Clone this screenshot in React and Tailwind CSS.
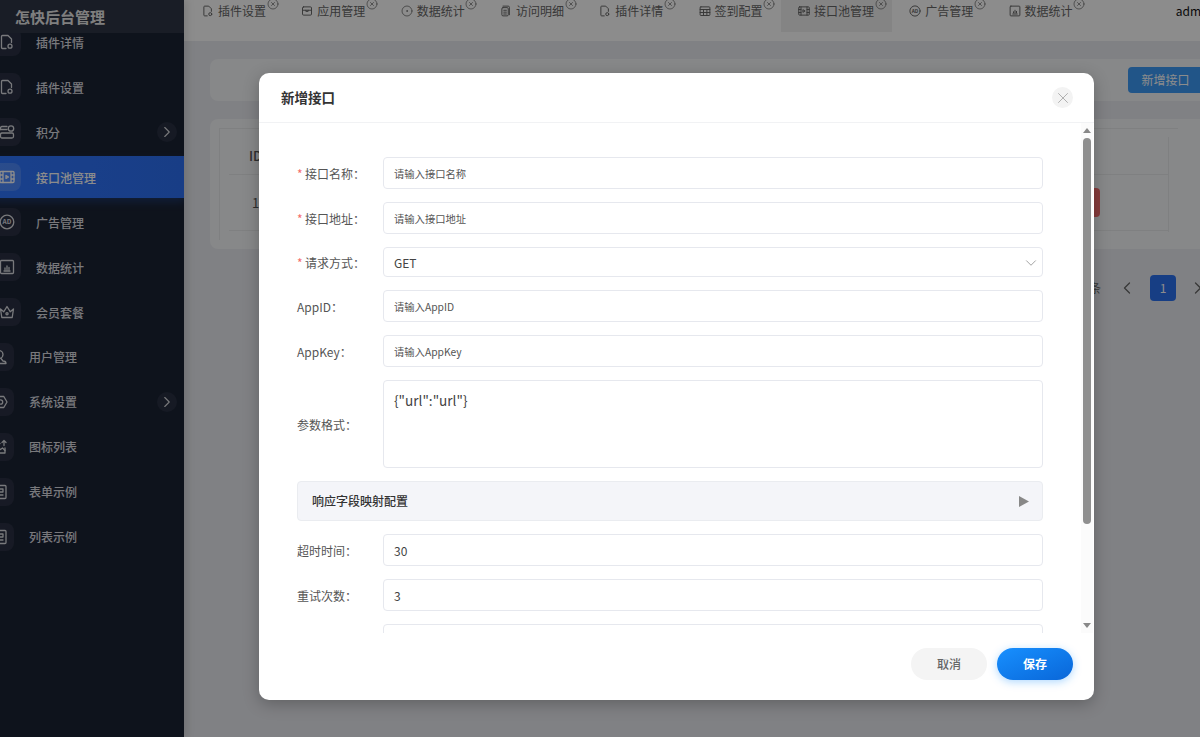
import { ChevronDown, ChevronLeft, ChevronRight, CircleDot, CircleX, X } from 'lucide-react';

const FONT = { fontFamily: '"Noto Sans CJK SC", "Noto Sans", sans-serif' };

const Svg = ({ size = 14, children }) => (
    <svg width={size} height={size} viewBox="0 0 16 16" fill="none" stroke="currentColor" strokeWidth="1.3" strokeLinecap="round" strokeLinejoin="round">
        {children}
    </svg>
);

const FileGear = ({ size }) => (
    <Svg size={size}>
        <path d="M7 14.5H3.5a1 1 0 0 1-1-1v-11a1 1 0 0 1 1-1H9l3.5 3.5v3.5" />
        <circle cx="11" cy="12.2" r="2" />
    </Svg>
);
const AppBox = ({ size }) => (
    <Svg size={size}>
        <rect x="2" y="2.5" width="12" height="11" rx="1.5" />
        <path d="M2 7h12M6.5 7v1.5h3V7" />
    </Svg>
);
const Pages = ({ size }) => (
    <Svg size={size}>
        <path d="M4 1.5h7a1.5 1.5 0 0 1 1.5 1.5v10" />
        <rect x="2.5" y="3.5" width="8.5" height="11" rx="1.5" />
        <path d="M5 7h3.5M5 9.5h3.5M5 12h3.5" />
    </Svg>
);
const GridCal = ({ size }) => (
    <Svg size={size}>
        <rect x="1.5" y="2.5" width="13" height="11.5" rx="1" />
        <path d="M1.5 6h13M1.5 10h13M6 6v8M10.5 6v8" />
    </Svg>
);
const Film = ({ size }) => (
    <Svg size={size}>
        <rect x="1" y="2.5" width="14" height="11" rx="1" />
        <path d="M4 2.5v11M12 2.5v11M1 6h3M1 10h3M12 6h3M12 10h3" />
        <path d="M7 6.5l2.5 1.5L7 9.5z" />
    </Svg>
);
const Ad = ({ size }) => (
    <Svg size={size}>
        <circle cx="8" cy="8" r="6.8" />
        <text x="8" y="10.4" textAnchor="middle" fontSize="6.5" fontWeight="700" fill="currentColor" stroke="none" style={FONT}>AD</text>
    </Svg>
);
const ChartBox = ({ size }) => (
    <Svg size={size}>
        <rect x="1.5" y="1.5" width="13" height="13" rx="1" />
        <path d="M5 12h6M6 10.5V9M8 10.5V7M10 10.5V8.5" />
    </Svg>
);
const Points = ({ size }) => (
    <Svg size={size}>
        <path d="M8 2.5H3a1.5 1.5 0 0 0-1.5 1.5v1.5" />
        <path d="M1.5 5.5H8" />
        <circle cx="12" cy="4.5" r="2.7" />
        <rect x="1.5" y="9" width="13" height="5" rx="1.5" />
    </Svg>
);
const CrownDot = ({ size }) => (
    <Svg size={size}>
        <path d="M1.500 5l3.200 2.800L8 2.500l3.300 5.300L14.500 5l-1.300 8.500H2.800z" />
        <circle cx="8" cy="9.800" r="1.100" />
    </Svg>
);
const UserIcon = ({ size }) => (
    <Svg size={size}>
        <circle cx="7" cy="5.5" r="4" />
        <path d="M5 9.5C4 11 2 12 2 14.5h12c0-1.5-1.5-2.5-3-2.5l-2-2.5" />
    </Svg>
);
const Gear = ({ size }) => (
    <Svg size={size}>
        <path d="M2 8l3.2-5.5h6.6L15 8l-3.2 5.5H5.200z" />
        <circle cx="8.500" cy="8" r="2.200" />
    </Svg>
);
const IconList = ({ size }) => (
    <Svg size={size}>
        <path d="M2 4.500h6M2 4.500v9.500h11V9" />
        <path d="M2 11l3.500-3 3 2.500 2-1.500 2.500 2.500M12 1.500v5M10 3.500l2-2 2 2" />
    </Svg>
);
const FormDoc = ({ size }) => (
    <Svg size={size}>
        <rect x="2" y="1.500" width="12" height="13" rx="1" />
        <path d="M5 5h6v3H5M5 11h6" />
    </Svg>
);

const tabs = [
    { label: '插件设置', icon: FileGear },
    { label: '应用管理', icon: AppBox },
    { label: '数据统计', icon: ({ size }) => <CircleDot size={size} strokeWidth={1.5} /> },
    { label: '访问明细', icon: Pages },
    { label: '插件详情', icon: FileGear },
    { label: '签到配置', icon: GridCal },
    { label: '接口池管理', icon: Film, active: true },
    { label: '广告管理', icon: Ad },
    { label: '数据统计', icon: ChartBox },
];

const menu = [
    { label: '插件详情', icon: FileGear, inset: true },
    { label: '插件设置', icon: FileGear, inset: true },
    { label: '积分', icon: Points, inset: true, more: true },
    { label: '接口池管理', icon: Film, inset: true, active: true },
    { label: '广告管理', icon: Ad, inset: true },
    { label: '数据统计', icon: ChartBox, inset: true },
    { label: '会员套餐', icon: CrownDot, inset: true },
    { label: '用户管理', icon: UserIcon },
    { label: '系统设置', icon: Gear, more: true },
    { label: '图标列表', icon: IconList },
    { label: '表单示例', icon: FormDoc },
    { label: '列表示例', icon: FormDoc },
];

function Sidebar() {
    return (
        <aside className="w-[184px] h-full shrink-0 flex flex-col bg-[#1b2333] shadow-[3px_0_8px_rgba(0,0,0,0.12)] z-10">
            <div className="h-[33px] shrink-0 bg-[#2f3545] pl-[15px] text-[15px] leading-[34px] font-bold text-[#e8e8e8] relative z-10">
                怎快后台管理
            </div>
            <nav className="flex-1 overflow-hidden">
                <div className="-mt-[12px]">
                    {menu.map((item) => (
                        <div
                            key={item.label}
                            className={`h-[42px] mb-[3px] flex items-center gap-[15px] pr-[7px] ${item.active ? 'bg-gradient-to-r from-[#2f76ff] to-[#2d70f4] text-white shadow-[0_4px_8px_rgba(47,114,255,0.25)]' : 'text-[#dcdde2]'} ${item.inset ? '-ml-[7px]' : '-ml-[14px]'}`}
                        >
                            <span className={`w-[28px] h-[28px] rounded-lg flex items-center justify-center shrink-0 ${item.active ? 'bg-white/15' : 'bg-[#2a3144]'}`}>
                                <item.icon size={16} />
                            </span>
                            <span className={`text-[12px] font-medium whitespace-nowrap ${item.inset ? 'pt-px' : ''}`}>{item.label}</span>
                            {item.more && (
                                <span className="ml-auto w-[20px] h-[20px] rounded-full bg-[#283042] flex items-center justify-center">
                                    <ChevronRight size={18} strokeWidth={1.5} />
                                </span>
                            )}
                        </div>
                    ))}
                </div>
            </nav>
        </aside>
    );
}

function TabBar() {
    return (
        <header className="h-[41px] shrink-0 bg-white flex items-start pl-px whitespace-nowrap">
            {tabs.map((tab, i) => (
                <div
                    key={i}
                    className={`relative h-[32px] shrink-0 pl-[17px] pr-[18.300px] flex items-center gap-[4px] pb-[10px] text-[12px] text-[#666] ${tab.active ? 'bg-[#f1f1f1]' : ''}`}
                >
                    <tab.icon size={12} />
                    <span>{tab.label}</span>
                    <CircleX size={12} strokeWidth={1.4} className="absolute right-[5.500px] -top-[2px]" />
                </div>
            ))}
            <span className="ml-[85px] text-[12px] leading-[22px] text-[#111]">admin</span>
        </header>
    );
}

function PageBehind() {
    return (
        <main className="flex-1 min-w-0 flex flex-col bg-[#e9ebf0] overflow-hidden">
            <TabBar />
            <div className="w-[1002px] ml-[26px] mt-[18px] h-[42px] shrink-0 rounded-lg bg-[#f6f7fa] flex items-center justify-end pr-[9px]">
                <button className="h-[26px] w-[75px] rounded bg-[#3c9bf8] text-white text-[12px]">新增接口</button>
            </div>
            <div className="w-[1002px] ml-[26px] mt-[18px] h-[130px] shrink-0 rounded-lg bg-[#f6f7fa] pl-[9px] pt-[9px]">
                <div className="w-[959px] h-[112px] border-l border-t border-[#e8e9ec] pl-[9px] pr-[9px] pt-[8px]">
                    <div className="h-[95px] border-r border-[#e8e9ec] text-[13px] text-[#555]">
                        <div className="h-[38px] border-b border-[#e8e9ec] pl-[20px] flex items-center font-medium">ID</div>
                        <div className="h-[56px] border-b border-[#e8e9ec] pl-[23px] pr-[68px] flex items-center justify-between">
                            <span>1</span>
                            <button className="w-[60px] h-[29px] rounded bg-[#f56c6c] text-white text-[12px]">删除</button>
                        </div>
                    </div>
                </div>
            </div>
            <div className="w-[1002px] ml-[26px] mt-[26px] h-[26px] shrink-0 flex items-center text-[12px] text-[#666]">
                <span className="ml-auto">共 1 条</span>
                <ChevronLeft size={20} strokeWidth={1.5} className="ml-[16px]" />
                <span className="ml-[13px] w-[26px] h-[26px] rounded bg-[#2b72f0] text-white flex items-center justify-center">1</span>
                <ChevronRight size={20} strokeWidth={1.5} className="ml-[12px] mr-[4px]" />
            </div>
        </main>
    );
}

const fieldBox = 'border border-[#e6e8ee] rounded-[4px] bg-white w-[660px] px-[10px] outline-none';

function Field({ label, required, children }) {
    return (
        <div className="flex items-center">
            <label className="w-[86px] shrink-0 pt-px text-[12px] text-[#555] whitespace-nowrap">
                {required && <span className="text-[#f56c6c] mr-[2.500px] inline-block">*</span>}
                {label && `${label}：`}
            </label>
            {children}
        </div>
    );
}

function Modal() {
    return (
        <div className="absolute left-[259px] top-[73px] w-[835px] h-[627px] rounded-[10px] bg-white flex flex-col overflow-hidden shadow-[0_4px_16px_rgba(0,0,0,0.25)]">
            <div className="h-[50px] shrink-0 border-b border-[#f1f2f4] pl-[22px] pr-[21px] flex items-center justify-between">
                <h2 className="text-[13.500px] font-bold text-[#333]">新增接口</h2>
                <button className="w-[21px] h-[21px] rounded-full bg-[#f3f3f3] flex items-center justify-center text-[#999]">
                    <X size={18} strokeWidth={1} />
                </button>
            </div>

            <div className="h-[510px] shrink-0 flex overflow-hidden">
                <div className="flex-1 pl-[38px] pt-[34px] flex flex-col gap-[13px] overflow-hidden">
                    <Field label="接口名称" required>
                        <input className={`${fieldBox} h-[32px] text-[10.300px] placeholder:text-[#555]`} placeholder="请输入接口名称" />
                    </Field>
                    <Field label="接口地址" required>
                        <input className={`${fieldBox} h-[32px] text-[10.300px] placeholder:text-[#555]`} placeholder="请输入接口地址" />
                    </Field>
                    <Field label="请求方式" required>
                        <div className={`${fieldBox} h-[30px] pt-px flex items-center justify-between text-[12px] text-[#444]`}>
                            GET
                            <ChevronDown size={18} strokeWidth={1.2} className="text-[#999] -mr-[8px]" />
                        </div>
                    </Field>
                    <Field label="AppID">
                        <input className={`${fieldBox} h-[32px] text-[10.300px] placeholder:text-[#555]`} placeholder="请输入AppID" />
                    </Field>
                    <Field label="AppKey">
                        <input className={`${fieldBox} h-[32px] text-[10.300px] placeholder:text-[#555]`} placeholder="请输入AppKey" />
                    </Field>
                    <Field label="参数格式">
                        <textarea
                            className={`${fieldBox} h-[88px] pt-[9px] resize-none text-[13.600px] leading-[20px] text-[#444]`}
                            defaultValue={'{"url":"url"}'}
                        />
                    </Field>
                    <div className="w-[746px] h-[40px] shrink-0 rounded-[4px] border border-[#eaecf0] bg-[#f4f5f9] pl-[14px] pr-[13px] flex items-center justify-between">
                        <span className="text-[12px] font-medium text-[#333]">响应字段映射配置</span>
                        <svg width="10" height="11" viewBox="0 0 10 11" className="text-[#888]"><path d="M0 0l10 5.500L0 11z" fill="currentColor" /></svg>
                    </div>
                    <Field label="超时时间">
                        <input className={`${fieldBox} h-[32px] text-[12px] text-[#444]`} defaultValue="30" />
                    </Field>
                    <Field label="重试次数">
                        <input className={`${fieldBox} h-[32px] text-[12px] text-[#444]`} defaultValue="3" />
                    </Field>
                    <Field>
                        <input className={`${fieldBox} h-[32px] text-[12px]`} />
                    </Field>
                </div>
                {/* scrollbar */}
                <div className="w-[12px] shrink-0 mr-px bg-[#fbfbfb] flex flex-col items-center pt-[5px] pb-[5px]">
                    <svg width="8" height="5" viewBox="0 0 8 5" className="text-[#888]"><path d="M4 0l4 5H0z" fill="currentColor" /></svg>
                    <div className="w-[8px] h-[386px] mt-[5px] rounded-full bg-[#8f8f8f]" />
                    <svg width="8" height="5" viewBox="0 0 8 5" className="text-[#888] mt-auto"><path d="M0 0h8L4 5z" fill="currentColor" /></svg>
                </div>
            </div>

            <div className="flex-1 flex items-start justify-end gap-[10px] pt-[15px] pr-[21px]">
                <button className="w-[76px] h-[32px] pb-px rounded-full bg-[#f4f4f4] text-[12px] font-medium text-[#666]">取消</button>
                <button className="w-[76px] h-[32px] pb-px rounded-full bg-gradient-to-br from-[#1890ff] to-[#0a66d8] text-[12px] font-bold text-white shadow-[0_2px_8px_rgba(24,144,255,0.35)]">保存</button>
            </div>
        </div>
    );
}

export default function App() {
    return (
        <div className="relative w-[1200px] h-[737px] overflow-hidden flex" style={FONT}>
            <Sidebar />
            <PageBehind />
            <div className="absolute inset-0 z-20 bg-black/45" />
            <div className="absolute inset-0 z-30">
                <Modal />
            </div>
        </div>
    );
}
